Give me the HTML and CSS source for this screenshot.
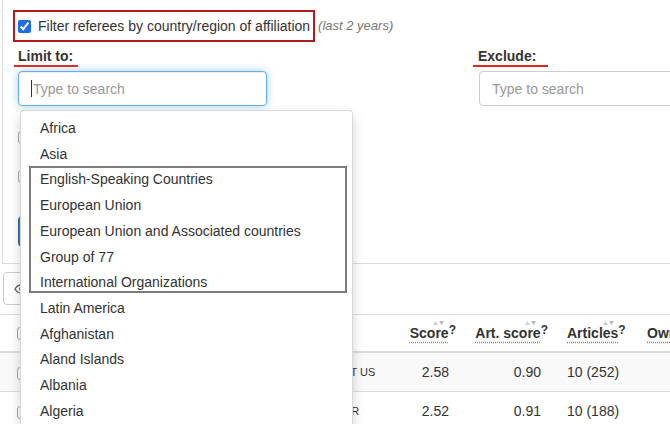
FILE: index.html
```html
<!DOCTYPE html>
<html lang="en">
<head>
<meta charset="utf-8">
<title>Referee filter</title>
<link rel="stylesheet" href="styles.css">
</head>
<body>
<section class="panel">
  <div class="filter-row">
    <label class="filter-label"><input type="checkbox" class="chk" checked>Filter referees by country/region of affiliation</label>
    <span class="note">(last 2 years)</span>
  </div>
  <div class="cols">
    <div class="col">
      <span class="field-label lim">Limit to:</span>
      <div class="search-wrap">
        <div class="search focus"><span class="caret"></span><span class="ph">Type to search</span></div>
        <ul class="dropdown">
          <li>Africa</li>
          <li>Asia</li>
          <li>English-Speaking Countries</li>
          <li>European Union</li>
          <li>European Union and Associated countries</li>
          <li>Group of 77</li>
          <li>International Organizations</li>
          <li>Latin America</li>
          <li>Afghanistan</li>
          <li>Aland Islands</li>
          <li>Albania</li>
          <li>Algeria</li>
          <div class="callout"></div>
        </ul>
      </div>
      <div class="under">
        <div class="opt o1"><span class="box"></span></div>
        <div class="opt o2"><span class="box"></span></div>
        <button class="btn-primary" aria-label="Apply filter"></button>
      </div>
    </div>
    <div class="col">
      <span class="field-label exc">Exclude:</span>
      <div class="search-wrap excl">
        <div class="search"><span class="ph">Type to search</span></div>
      </div>
    </div>
  </div>
</section>

<div class="toolbar">
  <button class="btn-default" aria-label="Columns">
    <svg width="14" height="10" viewBox="0 0 14 10"><path d="M1 5 C3 1.5 5 1 7 1 C9 1 11 1.5 13 5 C11 8.5 9 9 7 9 C5 9 3 8.5 1 5 Z" fill="none" stroke="#666" stroke-width="1.4"/><circle cx="7" cy="5" r="2" fill="#666"/></svg>
  </button>
</div>

<table class="results">
  <colgroup>
    <col class="w1"><col class="w2"><col class="w3"><col class="w4"><col class="w5"><col class="w6"><col class="w7">
  </colgroup>
  <thead>
    <tr>
      <th class="c1"><span class="box"></span></th>
      <th class="c2"></th>
      <th class="c3"></th>
      <th class="num"><span class="hd"><span class="sort"><svg width="11" height="4" viewBox="0 0 11 4"><path d="M0 4 L2.5 0 L5 4 Z" fill="#cfcfcf"/><path d="M6 0 L11 0 L8.5 4 Z" fill="#b8b8b8"/></svg></span><span class="lbl"><u>Score</u><sup>?</sup></span></span></th>
      <th class="num"><span class="hd"><span class="sort"><svg width="11" height="4" viewBox="0 0 11 4"><path d="M0 4 L2.5 0 L5 4 Z" fill="#cfcfcf"/><path d="M6 0 L11 0 L8.5 4 Z" fill="#b8b8b8"/></svg></span><span class="lbl"><u>Art. score</u><sup>?</sup></span></span></th>
      <th class="art"><span class="hd"><span class="sort"><svg width="11" height="4" viewBox="0 0 11 4"><path d="M0 4 L2.5 0 L5 4 Z" fill="#cfcfcf"/><path d="M6 0 L11 0 L8.5 4 Z" fill="#b8b8b8"/></svg></span><span class="lbl"><u>Articles</u><sup>?</sup></span></span></th>
      <th class="own"><span class="hd"><span class="sort"></span><span class="lbl"><u>Own journal</u></span></span></th>
    </tr>
  </thead>
  <tbody>
    <tr class="odd">
      <td class="c1"><span class="box"></span></td>
      <td class="c2"></td>
      <td class="c3">NAT US</td>
      <td class="num">2.58</td>
      <td class="num">0.90</td>
      <td class="art">10 (252)</td>
      <td class="own"></td>
    </tr>
    <tr>
      <td class="c1"><span class="box"></span></td>
      <td class="c2"></td>
      <td class="c3">DER</td>
      <td class="num">2.52</td>
      <td class="num">0.91</td>
      <td class="art">10 (188)</td>
      <td class="own"></td>
    </tr>
  </tbody>
</table>
</body>
</html>
```

FILE: styles.css
```css
html, body {
  margin: 0;
  padding: 0;
}
body {
  width: 670px;
  height: 424px;
  overflow: hidden;
  background: #fff;
  color: #333;
  font-family: "Liberation Sans", Arial, sans-serif;
  font-size: 14px;
  line-height: 20px;
}

/* ---------- top panel ---------- */
.panel {
  margin-left: 2px;
  border-left: 1px solid #dcdcdc;
  border-bottom: 1px solid #dcdcdc;
  padding: 10px 0 16px 11px;
}
.filter-row {
  display: flex;
  align-items: center;
  height: 32px;
}
.filter-label {
  display: inline-flex;
  align-items: center;
  gap: 7px;
  margin-left: -1px;
  padding: 4px 3px;
  border: 2px solid #b01c1c;
  font-size: 14px;
  line-height: 20px;
  color: #333;
}
.chk {
  width: 13px;
  height: 13px;
  margin: 0;
  accent-color: #1a6fe8;
}
.note {
  margin-left: 3px;
  font-size: 13px;
  font-style: italic;
  color: #777;
}
.cols {
  display: grid;
  grid-template-columns: 459px 1fr;
  margin-top: 5px;
}
.field-label {
  display: block;
  width: max-content;
  font-weight: bold;
  font-size: 14px;
  line-height: 18px;
  border-bottom: 2px solid #e3261b;
  color: #333;
}
.field-label.lim { padding: 0 5px 0 4px; }
.field-label.exc { padding: 0 12px 0 5px; }

.search-wrap {
  position: relative;
  margin: 4px 0 0 4px;
  width: 249px;
}
.search-wrap.excl {
  margin-left: 6px;
  width: 260px;
}
.search {
  box-sizing: border-box;
  height: 35px;
  display: flex;
  align-items: center;
  padding: 0 12px;
  border: 1px solid #ccc;
  border-radius: 4px;
  background: #fff;
  color: #999;
  font-size: 14px;
}
.search.focus {
  border-color: #66afe9;
  box-shadow: inset 0 1px 1px rgba(0,0,0,.075), 0 0 8px rgba(102,175,233,.6);
}
.caret {
  width: 1px;
  height: 17px;
  background: #333;
  margin-right: 1px;
}

/* dropdown (typeahead menu) */
.dropdown {
  position: absolute;
  top: calc(100% + 4px);
  left: 2px;
  z-index: 10;
  box-sizing: border-box;
  width: 333px;
  margin: 0;
  padding: 5px 0 4px;
  list-style: none;
  background: #fff;
  border: 1px solid rgba(0,0,0,.15);
  border-radius: 4px;
  box-shadow: 0 6px 12px rgba(0,0,0,.175);
}
.dropdown li {
  height: 25.73px;
  line-height: 25.73px;
  padding-left: 19px;
  font-size: 14px;
  color: #333;
  white-space: nowrap;
}
.callout {
  position: absolute;
  left: 8px;
  top: 55px;
  width: 318px;
  height: 127px;
  box-sizing: border-box;
  border: 2px solid #7d7d7d;
}

/* content under the dropdown */
.under {
  margin-left: 4px;
}
.opt {
  display: flex;
  align-items: center;
  height: 26px;
}
.o1 { margin-top: 18px; }
.o2 { margin-top: 13px; }
.box {
  display: inline-block;
  box-sizing: border-box;
  width: 13px;
  height: 13px;
  border: 1px solid #a8a8a8;
  border-radius: 3px;
  background: #fff;
}
.btn-primary {
  display: block;
  margin-top: 27px;
  width: 110px;
  height: 31px;
  border: 1px solid #2e6da4;
  border-radius: 4px;
  background: #337ab7;
}

/* ---------- toolbar ---------- */
.toolbar {
  display: flex;
  margin: 8px 0 9px 3px;
}
.btn-default {
  display: inline-flex;
  align-items: center;
  width: 100px;
  height: 33px;
  padding: 0 10px;
  border: 1px solid #ccc;
  border-radius: 4px;
  background: #fff;
}

/* ---------- table ---------- */
.results {
  width: 760px;
  table-layout: fixed;
  border-collapse: separate;
  border-spacing: 0;
  font-size: 14px;
}
.w1 { width: 40px; }
.w2 { width: 296px; }
.w3 { width: 59px; }
.w4 { width: 62px; }
.w5 { width: 92px; }
.w6 { width: 90px; }
.w7 { width: 121px; }

.results th {
  box-sizing: border-box;
  height: 39px;
  padding: 0 0 11px 0;
  border-top: 1px solid #ddd;
  border-bottom: 2px solid #ddd;
  vertical-align: bottom;
  line-height: 14px;
  font-weight: bold;
  text-align: left;
  white-space: nowrap;
  overflow: hidden;
}
.results td {
  box-sizing: border-box;
  height: 39px;
  padding: 0;
  border-bottom: 1px solid #ddd;
  vertical-align: middle;
  line-height: 20px;
  white-space: nowrap;
  overflow: hidden;
}
.results tr.odd td { background: #f9f9f9; }
.results .c1 { padding-left: 17px; }
.results th.c1 { vertical-align: middle; padding-bottom: 0; }
.results .c1 .box { vertical-align: middle; }
.results td.c3 {
  font-size: 11px;
  text-transform: uppercase;
}
.results .num { text-align: right; padding-right: 8px; }
.results .art { text-align: left; padding-left: 18px; }
.results .own { text-align: left; padding-left: 8px; }

.hd {
  display: inline-block;
  text-align: left;
}
.sort {
  display: block;
  height: 6px;
  line-height: 0;
  text-align: right;
  padding-right: 5px;
}
.sort svg { margin-top: 1px; }
.lbl { display: block; }
.lbl u {
  text-decoration: underline dotted #8a8a8a;
  text-underline-offset: 4px;
}
.lbl sup {
  font-size: 12px;
  line-height: 0;
  vertical-align: 4px;
  margin-right: -7px;
}
```
